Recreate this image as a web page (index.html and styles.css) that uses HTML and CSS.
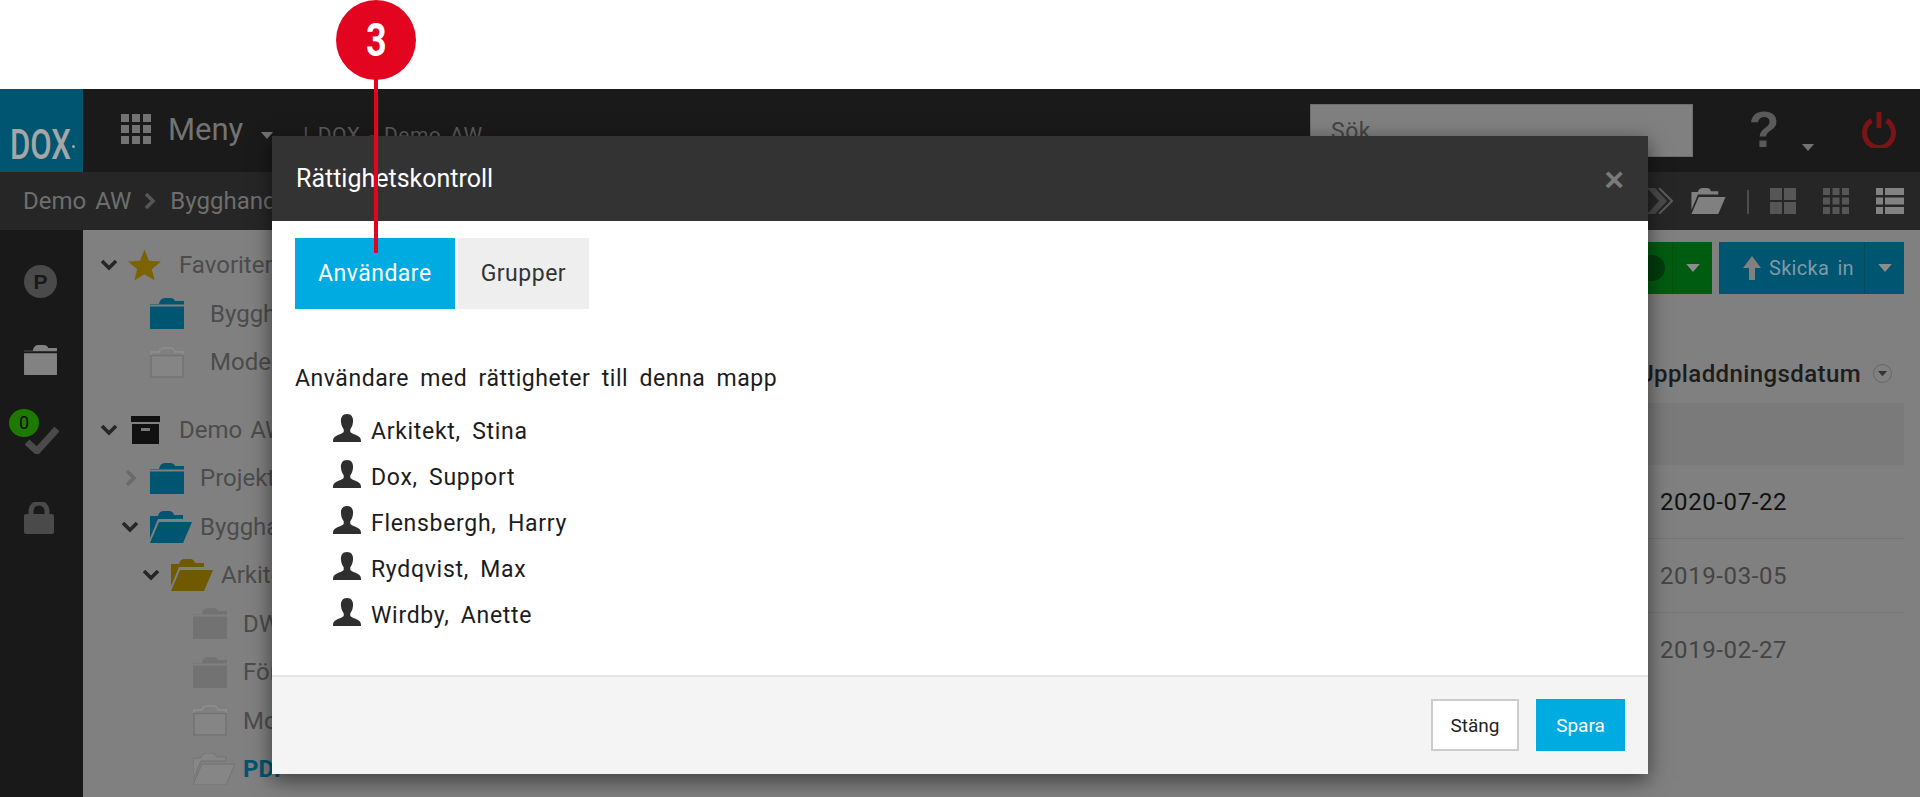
FILE: index.html
```html
<!DOCTYPE html>
<html lang="sv">
<head>
<meta charset="utf-8">
<title>Rättighetskontroll</title>
<link rel="stylesheet" href="styles.css">
</head>
<body>
<svg class="defs" aria-hidden="true">
  <symbol id="folder" viewBox="0 0 34 31"><path d="M0 6 H9 Q10 0 15 0 H20 Q24 0 25 3 H34 V6.500 H0Z"/><rect y="8.500" width="34" height="22.500"/></symbol>
  <symbol id="folder-line" viewBox="0 0 34 31"><path d="M1 8 V5 H9 Q10 1 15 1 H20 Q24 1 25 5 H33 V8" fill="none" stroke="#8e8e8e" stroke-width="1.500"/><rect x="1" y="8.500" width="32" height="21.500" fill="#858585" stroke="#737373" stroke-width="1.500"/></symbol>
  <symbol id="folder-open" viewBox="0 0 42 32"><path d="M0 27 V5 H8 Q9 0 14 0 H19 Q23 0 24 4 H33 V8 H8Z"/><path d="M9 11 H42 L33 32 H0Z"/></symbol>
  <symbol id="chev-down" viewBox="0 0 18 14"><path d="M2 3 L9 10 L16 3" fill="none" stroke="currentColor" stroke-width="3.600"/></symbol>
  <symbol id="chev-right" viewBox="0 0 14 18"><path d="M3 2 L10 9 L3 16" fill="none" stroke="currentColor" stroke-width="3.600"/></symbol>
  <symbol id="user" viewBox="0 0 28 28"><path d="M14 0 C18.500 0 20.500 3.500 20 8 C19.700 11.500 18.300 14 17.300 15.300 V18 C18.500 19.500 22 20.500 24.500 21.800 C26.800 23 28 24.500 28 27 V28 H0 V27 C0 24.500 1.200 23 3.500 21.800 C6 20.500 9.500 19.500 10.700 18 V15.300 C9.700 14 8.300 11.500 8 8 C7.500 3.500 9.500 0 14 0Z"/></symbol>
  <symbol id="caret" viewBox="0 0 12 8"><path d="M0 0 H12 L6 7Z"/></symbol>
</svg>

<div class="top-blank"></div>

<header class="app-bar">
  <div class="logo"><span class="logo-text">DOX</span><span class="logo-dot"></span></div>
  <div class="menu">
    <svg class="menu-grid" viewBox="0 0 30 30"><rect width="8" height="8"/><rect x="11" width="8" height="8"/><rect x="22" width="8" height="8"/><rect y="11" width="8" height="8"/><rect x="11" y="11" width="8" height="8"/><rect x="22" y="11" width="8" height="8"/><rect y="22" width="8" height="8"/><rect x="11" y="22" width="8" height="8"/><rect x="22" y="22" width="8" height="8"/></svg>
    <span class="menu-label">Meny</span>
    <svg class="caret menu-caret"><use href="#caret"/></svg>
  </div>
  <div class="app-title">| DOX - Demo AW</div>
  <div class="search">Sök</div>
  <div class="help">?</div>
  <svg class="caret help-caret"><use href="#caret"/></svg>
  <svg class="power" viewBox="0 0 36 36"><path d="M10.500 8.500 A14.500 14.500 0 1 0 25.500 8.500" fill="none" stroke="#7b1416" stroke-width="5"/><rect x="15.500" width="5" height="16" fill="#7b1416"/></svg>
</header>

<nav class="crumbs">
  <span class="crumb">Demo AW</span>
  <svg class="crumb-sep"><use href="#chev-right"/></svg>
  <span class="crumb">Bygghandlingar</span>
  <div class="crumb-tools">
    <svg class="tool-chevrons" viewBox="0 0 30 26"><path d="M2 0 H10 L22 13 L10 26 H2 L14 13Z" fill="#4a4a4a"/><path d="M14 0 L27 13 L14 26" fill="none" stroke="#5c5c5c" stroke-width="2"/></svg>
    <svg class="tool-folder"><use href="#folder-open"/></svg>
    <span class="tool-divider"></span>
    <svg class="tool-view" viewBox="0 0 26 26"><rect width="12" height="12"/><rect x="14" width="12" height="12"/><rect y="14" width="12" height="12"/><rect x="14" y="14" width="12" height="12"/></svg>
    <svg class="tool-view" viewBox="0 0 26 26"><rect width="7" height="7"/><rect x="9.500" width="7" height="7"/><rect x="19" width="7" height="7"/><rect y="9.500" width="7" height="7"/><rect x="9.500" y="9.500" width="7" height="7"/><rect x="19" y="9.500" width="7" height="7"/><rect y="19" width="7" height="7"/><rect x="9.500" y="19" width="7" height="7"/><rect x="19" y="19" width="7" height="7"/></svg>
    <svg class="tool-view tool-active" viewBox="0 0 28 26"><rect width="7" height="7"/><rect x="9" width="19" height="7"/><rect y="9.500" width="7" height="7"/><rect x="9" y="9.500" width="19" height="7"/><rect y="19" width="7" height="7"/><rect x="9" y="19" width="19" height="7"/></svg>
  </div>
</nav>

<main class="workspace">
  <aside class="rail">
    <div class="rail-p">P</div>
    <svg class="rail-folder"><use href="#folder"/></svg>
    <div class="rail-check">
      <svg class="check" viewBox="0 0 34 28"><path d="M2 16 L12 25 L32 3" fill="none" stroke="#4a4a4a" stroke-width="7"/></svg>
      <span class="badge">0</span>
    </div>
    <svg class="rail-lock" viewBox="0 0 30 32"><path d="M7 13 V9 A8 8 0 0 1 23 9 V13" fill="none" stroke="#4a4a4a" stroke-width="5"/><rect y="12" width="30" height="20" rx="2" fill="#4a4a4a"/></svg>
  </aside>

  <section class="tree">
    <div class="tree-row">
      <svg class="t-chev"><use href="#chev-down"/></svg>
      <svg class="t-star" viewBox="0 0 34 32"><path d="M17 0 L21.500 11.500 L34 12.500 L24.500 20.500 L27.500 32 L17 25.500 L6.500 32 L9.500 20.500 L0 12.500 L12.500 11.500Z"/></svg>
      <span class="t-label t-label-star">Favoriter</span>
    </div>
    <div class="tree-row in-1"><svg class="t-folder teal"><use href="#folder"/></svg><span class="t-label">Bygghandlingar</span></div>
    <div class="tree-row in-1"><svg class="t-folder"><use href="#folder-line"/></svg><span class="t-label">Modeller</span></div>

    <div class="tree-row tree-group">
      <svg class="t-chev"><use href="#chev-down"/></svg>
      <svg class="t-box" viewBox="0 0 29 28"><rect width="29" height="6" fill="#111"/><rect x="1" y="8" width="27" height="20" fill="#111"/><rect x="10" y="12" width="9" height="3" fill="#777"/></svg>
      <span class="t-label t-label-root">Demo AW</span>
    </div>
    <div class="tree-row in-0"><svg class="t-chev-r"><use href="#chev-right"/></svg><svg class="t-folder teal"><use href="#folder"/></svg><span class="t-label t-label-tight">Projektering</span></div>
    <div class="tree-row in-0"><svg class="t-chev"><use href="#chev-down"/></svg><svg class="t-open teal"><use href="#folder-open"/></svg><span class="t-label t-label-open">Bygghandlingar</span></div>
    <div class="tree-row in-2"><svg class="t-chev"><use href="#chev-down"/></svg><svg class="t-open gold"><use href="#folder-open"/></svg><span class="t-label t-label-open">Arkitekt</span></div>
    <div class="tree-row in-3"><svg class="t-folder grey"><use href="#folder"/></svg><span class="t-label t-label-tight">DWG</span></div>
    <div class="tree-row in-3"><svg class="t-folder grey"><use href="#folder"/></svg><span class="t-label t-label-tight">Förfrågan</span></div>
    <div class="tree-row in-3"><svg class="t-folder"><use href="#folder-line"/></svg><span class="t-label t-label-tight">Modell</span></div>
    <div class="tree-row in-3"><svg class="t-open t-open-flush pale"><use href="#folder-open"/></svg><span class="t-label t-label-pdf">PDF</span></div>
  </section>

  <section class="files">
    <div class="actions">
      <div class="split split-green">
        <span class="split-main"><span class="split-dot"></span></span>
        <span class="split-drop"><svg class="caret"><use href="#caret"/></svg></span>
      </div>
      <div class="split split-blue">
        <span class="split-main">
          <svg class="up-arrow" viewBox="0 0 18 24"><path d="M9 0 L18 12 H12 V24 H6 V12 H0Z"/></svg>
          <span class="split-label">Skicka in</span>
        </span>
        <span class="split-drop"><svg class="caret"><use href="#caret"/></svg></span>
      </div>
    </div>
    <div class="col-head">
      <span class="col-title">Uppladdningsdatum</span>
      <span class="sort"><svg class="caret"><use href="#caret"/></svg></span>
    </div>
    <div class="band"></div>
    <div class="date-row date-first">2020-07-22</div>
    <div class="date-row">2019-03-05</div>
    <div class="date-row date-last">2019-02-27</div>
  </section>
</main>

<div class="modal">
  <div class="modal-head">
    <h2 class="modal-title">Rättighetskontroll</h2>
    <span class="modal-close">×</span>
  </div>
  <div class="modal-body">
    <div class="tabs">
      <span class="tab tab-on">Användare</span>
      <span class="tab">Grupper</span>
    </div>
    <p class="lead">Användare med rättigheter till denna mapp</p>
    <ul class="people">
      <li class="person"><svg class="person-icon"><use href="#user"/></svg>Arkitekt, Stina</li>
      <li class="person"><svg class="person-icon"><use href="#user"/></svg>Dox, Support</li>
      <li class="person"><svg class="person-icon"><use href="#user"/></svg>Flensbergh, Harry</li>
      <li class="person"><svg class="person-icon"><use href="#user"/></svg>Rydqvist, Max</li>
      <li class="person"><svg class="person-icon"><use href="#user"/></svg>Wirdby, Anette</li>
    </ul>
  </div>
  <div class="modal-foot">
    <span class="btn btn-close">Stäng</span>
    <span class="btn btn-save">Spara</span>
  </div>
</div>

<div class="callout-line"></div>
<div class="callout"><span class="callout-num">3</span></div>
</body>
</html>
```

FILE: styles.css
```css
* { box-sizing: border-box; }
html, body { margin: 0; height: 797px; overflow: hidden; }
body {
  position: relative;
  background: #fff;
  font-family: "Roboto", sans-serif;
  font-size: 23px;
  letter-spacing: .5px;
  word-spacing: 5px;
  color: #1c1c1c;
}
.defs { position: absolute; width: 0; height: 0; }
.top-blank { height: 89px; }

/* application bar */
.app-bar { display: flex; align-items: flex-start; height: 83px; background: #1a1a1a; position: relative; }
.logo { width: 83px; height: 83px; background: #005570; display: flex; align-items: flex-end; justify-content: flex-start; padding: 0 0 4px 0; overflow: hidden; flex: none; position: relative; }
.logo-text { font-size: 42px; line-height: 46px; font-weight: 500; color: #a6a6a6; letter-spacing: 0; transform-origin: 0 50%; transform: translateX(10px) scaleX(.74); }
.logo-dot { position: absolute; left: 72px; top: 56px; width: 3px; height: 3px; background: #a6a6a6; border-radius: 50%; }
.menu { display: flex; align-items: center; margin-left: 38px; height: 83px; padding-bottom: 3px; }
.menu-grid { width: 30px; height: 30px; fill: #737373; }
.menu-label { font-size: 31px; color: #737373; margin-left: 17px; letter-spacing: 0; }
.caret { width: 12px; height: 8px; fill: #737373; display: block; }
.menu-caret { margin-left: 18px; margin-top: 14px; }
.app-title { font-size: 21px; color: #5a5a5a; margin-left: 30px; margin-top: 34px; white-space: nowrap; word-spacing: 3px; }
.search { margin-left: auto; width: 383px; height: 53px; margin-top: 15px; background: #808080; border: 1px solid #6e6e6e; padding: 13px 20px; font-size: 23px; color: #444; }
.help { width: 40px; margin-left: 51px; font-family: "Liberation Sans", sans-serif; font-weight: 700; font-size: 50px; line-height: 83px; height: 83px; color: #5a5a5a; letter-spacing: 0; text-align: center; padding-bottom: 6px; }
.help-caret { margin-left: 18px; margin-top: 55px; }
.power { width: 36px; height: 36px; margin-left: 47px; margin-right: 23px; margin-top: 23px; }

/* breadcrumb bar */
.crumbs { display: flex; align-items: center; height: 58px; background: #262626; padding-left: 23px; padding-right: 16px; font-size: 24px; letter-spacing: 0; word-spacing: 3px; color: #6e6e6e; white-space: nowrap; }
.crumb-sep { width: 14px; height: 18px; margin: 0 13px 0 12px; color: #565656; }
.crumb-tools { margin-left: auto; display: flex; align-items: center; }
.tool-chevrons { width: 30px; height: 26px; }
.tool-folder { width: 35px; height: 26px; margin-left: 16px; fill: #808080; }
.tool-divider { width: 2px; height: 24px; background: #4d4d4d; margin: 2px 21px 0 21px; }
.tool-view { width: 26px; height: 26px; fill: #565656; margin-right: 27px; }
.tool-view:last-child { width: 28px; margin-right: 0; fill: #828282; }

/* main area */
.workspace { display: flex; height: 567px; background: #808080; }
.rail { width: 83px; background: #191919; display: flex; flex-direction: column; align-items: flex-start; padding-left: 24px; padding-top: 35px; flex: none; }
.rail-p { width: 33px; height: 33px; border-radius: 50%; background: #4a4a4a; color: #191919; font-family: "Liberation Sans", sans-serif; font-weight: 700; font-size: 21px; line-height: 33px; text-align: center; letter-spacing: 0; }
.rail-folder { width: 33px; height: 30px; fill: #828282; margin-top: 47px; }
.rail-check { position: relative; width: 34px; height: 28px; margin-top: 51px; margin-left: 1px; }
.check { width: 34px; height: 28px; display: block; }
.badge { position: absolute; left: -16px; top: -17px; width: 30px; height: 28px; border-radius: 50%; background: #1d7a00; color: #0c0c0c; font-size: 18px; line-height: 28px; text-align: center; letter-spacing: 0; }
.rail-lock { width: 30px; height: 32px; margin-top: 48px; }

/* folder tree */
.tree { width: 385px; flex: none; padding: 11px 0 0 17px; overflow: hidden; }
.tree-row { display: flex; align-items: center; height: 48.500px; white-space: nowrap; color: #4c4c4c; font-size: 24px; letter-spacing: 0; word-spacing: 2px; }
.tree-group { margin-top: 19px; }
.in-0 { padding-left: 21px; }
.in-1 { padding-left: 50px; }
.in-2 { padding-left: 42px; }
.in-3 { padding-left: 93px; }
.t-chev { width: 18px; height: 14px; color: #262626; flex: none; }
.t-chev-r { width: 14px; height: 18px; color: #6a6a6a; flex: none; margin: 0 12px 0 3px; }
.t-star { width: 33px; height: 32px; fill: #7a6300; margin-left: 10px; flex: none; }
.t-box { width: 29px; height: 28px; margin-left: 13px; flex: none; }
.t-folder { width: 34px; height: 31px; flex: none; }
.t-open { width: 42px; height: 32px; flex: none; margin-left: 11px; }
.t-open-flush { margin-left: 0; }
.teal { fill: #005570; }
.gold { fill: #6f5a00; }
.grey { fill: #727272; }
.pale { fill: #868686; stroke: #737373; }
.t-label { margin-left: 26px; }
.t-label-star { margin-left: 18px; }
.t-label-root { margin-left: 19px; }
.t-label-tight { margin-left: 16px; }
.t-label-open { margin-left: 8px; }
.t-label-pdf { margin-left: 8px; color: #005570; font-weight: 700; }

/* file list */
.files { flex: 1; padding: 12px 16px 0 0; min-width: 0; }
.actions { display: flex; justify-content: flex-end; gap: 7px; }
.split { display: flex; height: 52px; color: #808080; }
.split-green { background: #005c10; width: 220px; }
.split-blue { background: #005570; width: 185px; }
.split-main { flex: 1; display: flex; align-items: center; }
.split-green .split-main { justify-content: flex-end; padding-right: 7px; }
.split-dot { width: 26px; height: 26px; border-radius: 50%; background: #003d0b; }
.split-blue .split-main { padding-left: 24px; }
.split-drop { width: 40px; display: flex; align-items: center; justify-content: center; border-left: 1px solid #004a62; }
.split-green .split-drop { border-left-color: #04500f; }
.split-drop .caret { fill: #8d8d8d; width: 14px; height: 9px; }
.up-arrow { width: 18px; height: 24px; fill: #808080; }
.split-label { margin-left: 8px; font-size: 20px; color: #7f9aa6; white-space: nowrap; letter-spacing: .3px; word-spacing: 3px; }
.col-head { display: flex; justify-content: flex-end; align-items: center; height: 109px; padding: 50px 12px 0 0; font-size: 24px; color: #1d1d1d; font-weight: 500; letter-spacing: .4px; white-space: nowrap; }
.sort { width: 19px; height: 19px; border-radius: 50%; border: 1.500px solid #666; margin-left: 12px; display: flex; align-items: center; justify-content: center; }
.sort .caret { width: 9px; height: 6px; fill: #333; }
.band { height: 62px; background: #7a7a7a; }
.date-row { height: 74px; display: flex; align-items: center; padding-left: 1192px; color: #444; font-size: 24px; letter-spacing: .6px; border-bottom: 1px solid #767676; white-space: nowrap; }
.date-first { color: #111; }
.date-last { border-bottom: 0; }

/* modal */
.modal { position: absolute; left: 272px; top: 136px; width: 1376px; height: 638px; display: flex; flex-direction: column; background: #fff; box-shadow: 0 6px 20px rgba(0,0,0,.55); }
.modal-head { height: 85px; flex: none; background: #333; display: flex; align-items: center; justify-content: space-between; padding: 0 24px; }
.modal-title { margin: 0; font-size: 25px; font-weight: 400; color: #fff; letter-spacing: 0; }
.modal-close { font-family: "Liberation Sans", sans-serif; font-weight: 700; font-size: 34px; line-height: 34px; color: #7a7a7a; letter-spacing: 0; }
.modal-body { flex: 1; padding: 17px 23px 0; }
.tabs { display: flex; gap: 3px; }
.tab { height: 71px; padding: 0 23px; display: flex; align-items: center; background: #eee; color: #333; }
.tab-on { background: #00abe1; color: #fff; }
.lead { margin: 54px 0 0; line-height: 32px; letter-spacing: .55px; }
.people { list-style: none; margin: 13px 0 0; padding: 0 0 0 38px; letter-spacing: .7px; }
.person { display: flex; align-items: center; height: 46px; white-space: pre; }
.person-icon { width: 28px; height: 28px; margin-right: 10px; fill: #2f2f2f; flex: none; position: relative; top: -3px; }
.modal-foot { height: 99px; flex: none; background: #f4f4f4; border-top: 2px solid #e6e6e6; display: flex; justify-content: flex-end; align-items: flex-start; gap: 17px; padding: 22px 23px 0 0; }
.btn { width: 88px; height: 52px; display: flex; align-items: center; justify-content: center; font-size: 19px; letter-spacing: 0; }
.btn-close { background: #fff; border: 2px solid #ccc; color: #222; }
.btn-save { width: 89px; background: #00abe1; color: #fff; }

/* callout */
.callout { position: absolute; left: 336px; top: 0; width: 80px; height: 80px; border-radius: 50%; background: #e30420; color: #fff; font-size: 46px; font-weight: 700; line-height: 80px; text-align: center; letter-spacing: 0; }
.callout-num { display: inline-block; transform: scaleX(.78); }
.callout-line { position: absolute; left: 374px; top: 70px; width: 4px; height: 183px; background: #e30420; }
```
